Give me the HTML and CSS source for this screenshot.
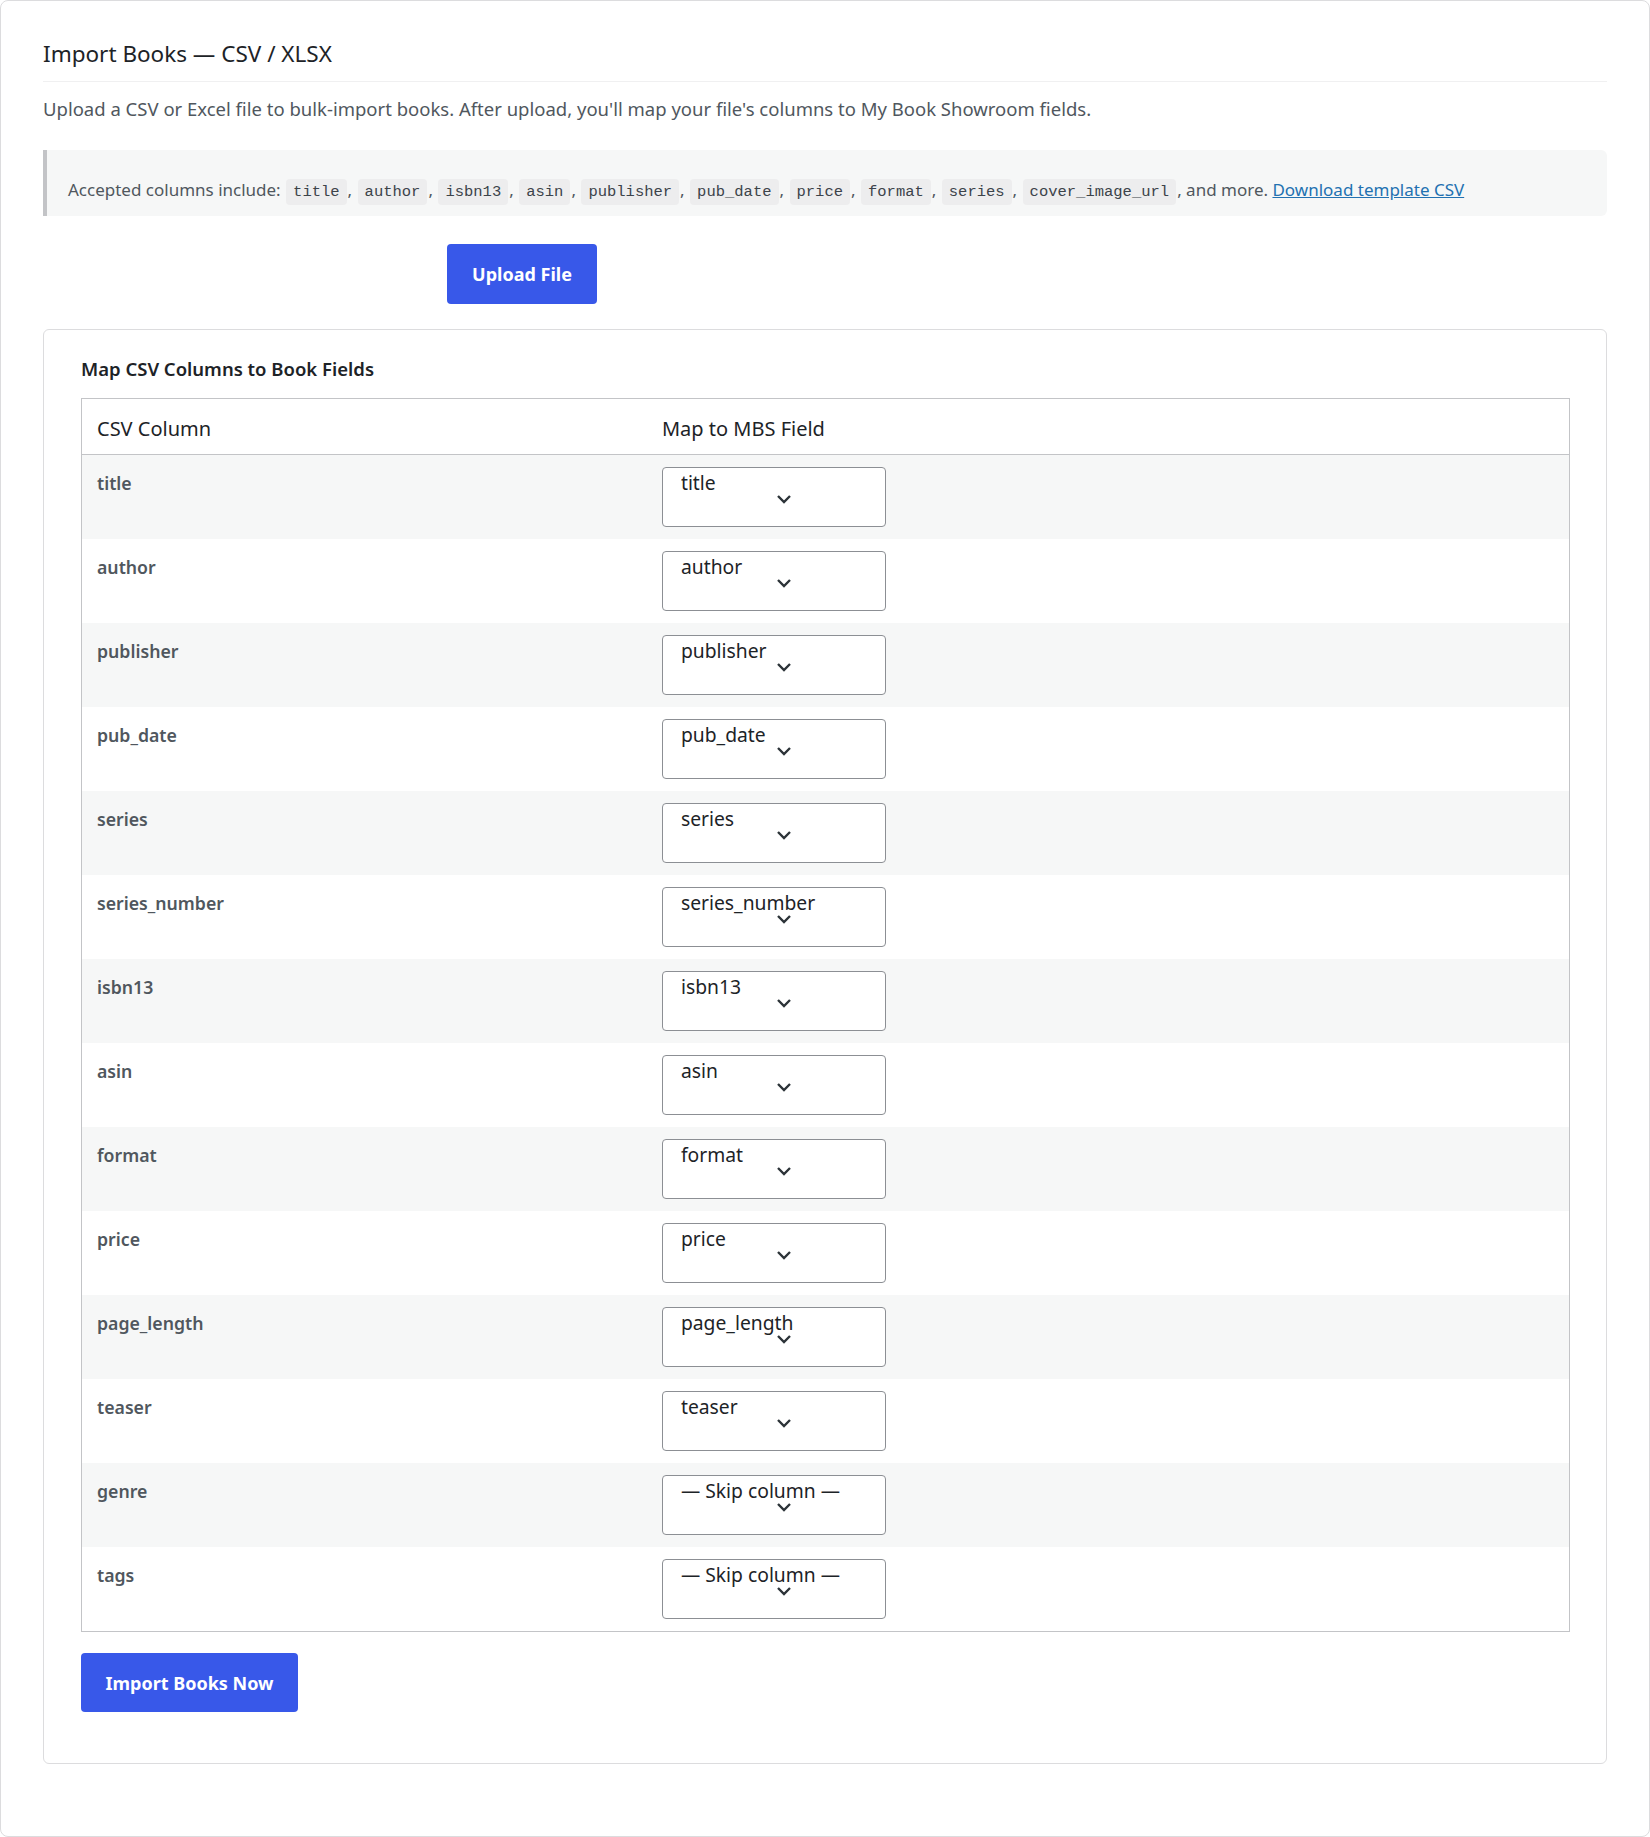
FILE: index.html
```html
<!DOCTYPE html>
<html lang="en">
  <head>
    <meta charset="UTF-8" />
    <meta name="viewport" content="width=device-width, initial-scale=1.0" />
    <title>Import Books</title>
    <link rel="stylesheet" href="styles.css">
  </head>
  <body>
    <div class="import-card">
      <h2 class="import-title">Import Books — CSV / XLSX</h2>
      <p class="import-intro">Upload a CSV or Excel file to bulk-import books. After upload, you'll map your file's columns to My Book Showroom fields.</p>

      <div class="notice">
        Accepted columns include: <code>title</code>, <code>author</code>, <code>isbn13</code>, <code>asin</code>, <code>publisher</code>, <code>pub_date</code>, <code>price</code>, <code>format</code>, <code>series</code>, <code>cover_image_url</code>, and more. <a href="#">Download template CSV</a>
      </div>

      <form class="upload-form">
        <button type="button" class="btn upload-btn">Upload File</button>
      </form>

      <div class="map-card">
        <h3 class="map-title">Map CSV Columns to Book Fields</h3>
        <table class="map-table">
          <thead>
            <tr>
              <th class="col-csv">CSV Column</th>
              <th>Map to MBS Field</th>
            </tr>
          </thead>
          <tbody id="map-rows"></tbody>
        </table>
        <button type="button" class="btn import-btn">Import Books Now</button>
      </div>
    </div>

    <script>
      const columns = [
        ["title", "title"],
        ["author", "author"],
        ["publisher", "publisher"],
        ["pub_date", "pub_date"],
        ["series", "series"],
        ["series_number", "series_number"],
        ["isbn13", "isbn13"],
        ["asin", "asin"],
        ["format", "format"],
        ["price", "price"],
        ["page_length", "page_length"],
        ["teaser", "teaser"],
        ["genre", "— Skip column —"],
        ["tags", "— Skip column —"]
      ];

      const rows = document.getElementById("map-rows");

      // Build one row per CSV column
      columns.forEach(function (col) {
        const tr = document.createElement("tr");
        tr.innerHTML = `
          <td class="csv-name">${col[0]}</td>
          <td>
            <div class="select-wrap">
              <select><option>${col[1]}</option></select>
              <svg class="chevron" width="16" height="10" viewBox="0 0 16 10">
                <path d="M2 2l6 6 6-6" fill="none" stroke="#2c3338" stroke-width="2.4" />
              </svg>
            </div>
          </td>
        `;
        rows.appendChild(tr);
      });
    </script>
  </body>
</html>
```

FILE: styles.css
```css
body {
  margin: 0;
  padding: 0;
  background-color: #fff;
  font-family: "Noto Sans", "Open Sans", sans-serif;
  color: #1d2327;
}

.import-card {
  box-sizing: border-box;
  min-height: 1837px;
  border: 1px solid #dcdcde;
  border-radius: 8px;
  padding: 39px 42px 72px 42px;
}

.import-title {
  margin: 0;
  padding-bottom: 13px;
  border-bottom: 1px solid #f0f0f1;
  font-size: 22.5px;
  font-weight: 400;
  line-height: 28px;
  color: #1d2327;
}

.import-intro {
  margin: 14px 0 0;
  font-size: 18.5px;
  line-height: 26px;
  color: #50575e;
}

.notice {
  margin-top: 28px;
  padding: 27px 20px 13px 21px;
  background-color: #f6f7f7;
  border-left: 4px solid #c3c4c7;
  border-radius: 0 6px 6px 0;
  font-size: 17px;
  line-height: 26px;
  color: #50575e;
}

.notice code {
  font-family: "Liberation Mono", "DejaVu Sans Mono", monospace;
  font-size: 15.5px;
  line-height: 1;
  background-color: #ededee;
  color: #3c434a;
  padding: 4px 7px;
  margin: 0 1px;
  border-radius: 4px;
}

.notice a {
  color: #2271b1;
}

.upload-form {
  margin: 28px 0 0 404px;
}

.btn {
  font-family: "Noto Sans", "Open Sans", sans-serif;
  background-color: #3858e9;
  color: #fff;
  border: none;
  border-radius: 4px;
  font-weight: 700;
  font-size: 18px;
  cursor: pointer;
}

.upload-btn {
  width: 150px;
  height: 60px;
}

.map-card {
  margin-top: 25px;
  border: 1px solid #dcdcde;
  border-radius: 6px;
  padding: 26px 36px 51px 37px;
}

.map-title {
  margin: 0 0 16px;
  font-size: 18.5px;
  font-weight: 600;
  line-height: 26px;
  color: #1d2327;
}

.map-table {
  width: 100%;
  border-collapse: collapse;
  border: 1px solid #c3c4c7;
}

.map-table th {
  text-align: left;
  font-weight: 400;
  font-size: 20px;
  color: #1d2327;
  height: 52px;
  padding: 3px 15px 0;
  border-bottom: 1px solid #c3c4c7;
}

.map-table .col-csv {
  width: 38%;
}

.map-table td {
  vertical-align: top;
  padding: 12px 15px;
  height: 60px;
}

.map-table tbody tr:nth-child(odd) {
  background-color: #f6f7f7;
}

.csv-name {
  font-size: 17.7px;
  font-weight: 600;
  line-height: 32px;
  color: #50575e;
}

.select-wrap {
  position: relative;
  width: 224px;
  height: 60px;
}

.select-wrap select {
  appearance: none;
  -webkit-appearance: none;
  box-sizing: border-box;
  width: 224px;
  height: 60px;
  margin: 0;
  padding: 2px 18px 30px 18px;
  border: 1px solid #8c8f94;
  border-radius: 4px;
  background-color: #fff;
  font-family: "Noto Sans", "Open Sans", sans-serif;
  font-size: 19.3px;
  line-height: 26px;
  color: #1d2327;
}

.chevron {
  position: absolute;
  left: 114px;
  top: 27px;
  pointer-events: none;
}

.import-btn {
  margin-top: 21px;
  width: 217px;
  height: 59px;
}
```
